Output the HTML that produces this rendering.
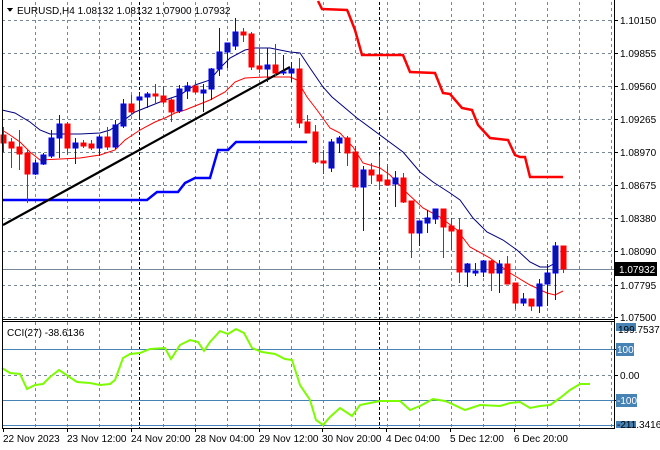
<!DOCTYPE html>
<html><head><meta charset="utf-8"><style>
html,body{margin:0;padding:0;background:#fff;width:660px;height:450px;overflow:hidden}
svg text{font-family:"Liberation Sans",sans-serif;font-size:10px;fill:#000}
</style></head><body>
<svg id="s" width="660" height="450" viewBox="0 0 660 450" xmlns="http://www.w3.org/2000/svg" shape-rendering="crispEdges">
<rect width="660" height="450" fill="#fff"/>
<g id="grid" stroke="#778899" stroke-dasharray="3,3" stroke-width="1"></g>
<g stroke="#000" stroke-dasharray="3,2"><line x1="139.5" y1="2" x2="139.5" y2="428"/><line x1="379.5" y1="2" x2="379.5" y2="428"/></g>
<line x1="2" y1="269.5" x2="614" y2="269.5" stroke="#778899"/>
<g stroke="#4682b4"><line x1="2" y1="349.5" x2="614" y2="349.5"/><line x1="2" y1="400.5" x2="614" y2="400.5"/><line x1="2" y1="425.5" x2="614" y2="425.5"/></g>
<g shape-rendering="auto" fill="none">
<polyline stroke="#0000ff" stroke-width="2.5" points="2,200 147,200 157,192 178,192 185,183 195,178 210,178 218,150 228,150 236,142 307,142"/>
<polyline stroke="#ff0000" stroke-width="2.5" points="318,1 322,9 347,10 348,12 355,30 362,55 403,55 410,72 435,73 443,93 450,94 462,108 472,110 478,125 490,138 508,140 515,155 520,157 525,157 530,177 563,177"/>
<polyline stroke="#000080" stroke-width="1" points="2,110 15,113 30,122 40,130 50,134 65,134 80,134 100,133 110,130 120,123 135,112 150,106 165,100 180,95 195,85 210,80 220,68 230,58 245,50 255,48 270,48 290,52 300,53 310,68 323,87 332,97 357,118 380,135 403,152 420,172 433,182 450,193 460,200 473,218 487,232 503,240 517,250 530,262 540,267 548,267 557,262"/>
<polyline stroke="#ff0000" stroke-width="1" points="2,130 10,135 20,142 30,152 40,160 60,159 80,158 100,155 115,150 125,140 140,130 155,122 165,118 175,113 185,110 200,104 210,100 225,92 235,82 245,78 265,77 290,77 297,80 307,97 317,110 330,128 340,133 353,147 363,163 380,168 390,175 407,193 423,208 440,217 457,230 470,247 490,258 510,273 530,285 547,293 555,295 563,291"/>
<line x1="3" y1="225" x2="290" y2="67" stroke="#000" stroke-width="2.2"/>
<polyline stroke="#7cfc00" stroke-width="2" points="2,368 10,373 20,374 27,389 35,385 43,384 50,377 59,370 68,376 77,382 90,383 100,385 110,384 115,380 123,358 130,354 140,353 150,349 165,348 171,359 180,345 190,340 198,342 204,351 210,342 220,331 228,334 236,329 244,333 252,348 262,352 275,354 285,359 292,360 300,385 310,400 316,420 323,425 330,417 340,408 352,416 360,405 370,403 380,401 400,401 410,410 420,406 433,399 445,401 450,403 465,410 480,405 500,406 510,403 520,402 530,408 540,406 550,405 560,398 570,390 580,384 590,384"/>
</g>
<g id="c"></g>
<g stroke="#000" fill="none">
<line x1="2.5" y1="0" x2="2.5" y2="429"/>
<line x1="614.5" y1="0" x2="614.5" y2="429"/>
<line x1="2" y1="319.5" x2="615" y2="319.5"/>
<line x1="2" y1="321.5" x2="615" y2="321.5"/>
<line x1="2" y1="428.5" x2="615" y2="428.5"/>
</g>
<polygon points="7,8 13,8 10,12" fill="#000"/>
<text x="17" y="14">EURUSD,H4  1.08132 1.08132 1.07900 1.07932</text>
<text x="7" y="336">CCI(27) -38.6136</text>
<g id="ticks" stroke="#000"></g>
<text x="620" y="24">1.10150</text><text x="620" y="57">1.09855</text><text x="620" y="90">1.09560</text><text x="620" y="123">1.09265</text><text x="620" y="156">1.08970</text><text x="620" y="189">1.08675</text><text x="620" y="222">1.08380</text><text x="620" y="255">1.08090</text><text x="620" y="289">1.07795</text><text x="620" y="321">1.07500</text>
<rect x="615" y="262" width="42" height="14" fill="#000"/><text x="619" y="273" style="fill:#fff">1.07932</text>
<rect x="616" y="323" width="20" height="8" fill="#4682b4"/><text x="618" y="333">199.7537</text>
<rect x="616" y="343" width="18" height="13" fill="#4682b4"/><text x="617" y="353" style="fill:#fff">100</text>
<text x="620" y="379">0.00</text>
<rect x="616" y="394" width="21" height="13" fill="#4682b4"/><text x="617" y="404" style="fill:#fff">-100</text>
<rect x="616" y="421" width="20" height="7" fill="#4682b4"/><text x="617" y="428">-211.3416</text>
<text x="3" y="442">22 Nov 2023</text><text x="67" y="442">23 Nov 12:00</text><text x="131" y="442">24 Nov 20:00</text><text x="195" y="442">28 Nov 04:00</text><text x="259" y="442">29 Nov 12:00</text><text x="322" y="442">30 Nov 20:00</text><text x="386" y="442">4 Dec 04:00</text><text x="450" y="442">5 Dec 12:00</text><text x="514" y="442">6 Dec 20:00</text>
</svg>
<script>
var NS="http://www.w3.org/2000/svg";
function el(p,n,a){var e=document.createElementNS(NS,n);for(var k in a)e.setAttribute(k,a[k]);p.appendChild(e);return e;}
var g=document.getElementById('grid');
for(var x=35;x<614;x+=32){el(g,'line',{x1:x+.5,y1:2,x2:x+.5,y2:319});el(g,'line',{x1:x+.5,y1:322,x2:x+.5,y2:428});}
[20,53,86,119,152,185,218,251,285,317].forEach(function(y){el(g,'line',{x1:2,y1:y+.5,x2:614,y2:y+.5});});
el(g,'line',{x1:2,y1:375.5,x2:614,y2:375.5});
var t=document.getElementById('ticks');
[20,53,86,119,152,185,218,251,285,317,349,375,400].forEach(function(y){el(t,'line',{x1:614,y1:y+.5,x2:618,y2:y+.5});});
[3,67,131,195,259,322,386,450,514].forEach(function(x){el(t,'line',{x1:x+.5,y1:428,x2:x+.5,y2:432});});
var C=[[0,135,143,127,152],[0,142,148,138,168],[0,147,154,130,170],[0,153,174,150,203],[1,163,174,160,175],[1,155,164,153,165],[1,138,156,130,158],[1,124,138,115,158],[0,124,148,122,155],[1,143,148,138,164],[0,143,146,140,148],[0,144,148,140,150],[1,137,148,135,156],[0,137,147,127,150],[1,125,147,120,149],[1,104,126,99,128],[0,104,112,95,115],[1,97,100,93,120],[1,94,97,92,108],[0,94,96,84,104],[0,96,102,86,104],[0,100,112,98,122],[1,89,111,85,113],[1,86,91,82,99],[0,86,92,82,94],[1,90,93,84,112],[1,69,89,68,100],[1,52,69,28,76],[1,43,52,43,68],[1,32,46,18,50],[0,32,35,28,42],[0,34,67,32,70],[0,66,69,48,73],[1,65,69,48,82],[0,65,73,44,76],[1,72,73,55,75],[1,69,73,62,82],[0,69,123,58,128],[0,122,133,115,133],[0,132,162,125,164],[0,161,163,150,174],[1,142,168,139,172],[1,138,143,136,153],[0,138,153,136,166],[0,152,187,146,187],[1,170,187,166,231],[0,170,175,163,184],[0,175,181,155,190],[0,180,185,164,185],[1,178,184,171,207],[0,178,202,173,203],[0,201,233,201,258],[1,221,233,221,246],[1,218,223,210,233],[1,209,219,209,224],[0,209,227,209,258],[0,226,231,218,250],[0,230,272,218,283],[1,264,272,263,287],[1,271,273,263,276],[1,261,272,260,277],[0,261,273,260,291],[1,264,273,260,293],[0,264,284,256,284],[0,283,303,283,309],[1,299,303,293,306],[0,299,306,299,311],[1,284,306,279,313],[1,273,284,264,306],[1,246,273,242,300],[0,246,269,246,273]];
var c=document.getElementById('c');
C.forEach(function(d,i){var x=3+8*i;var col=d[0]?'#0000ff':'#ff0000';
el(c,'line',{x1:x+.5,y1:d[3],x2:x+.5,y2:d[4],stroke:col});
el(c,'rect',{x:x-2,y:d[1],width:5,height:Math.max(1,d[2]-d[1]),fill:d[0]?'#0b14a8':'#ff0000',stroke:col,'stroke-width':0.6});});
</script>
</body></html>
